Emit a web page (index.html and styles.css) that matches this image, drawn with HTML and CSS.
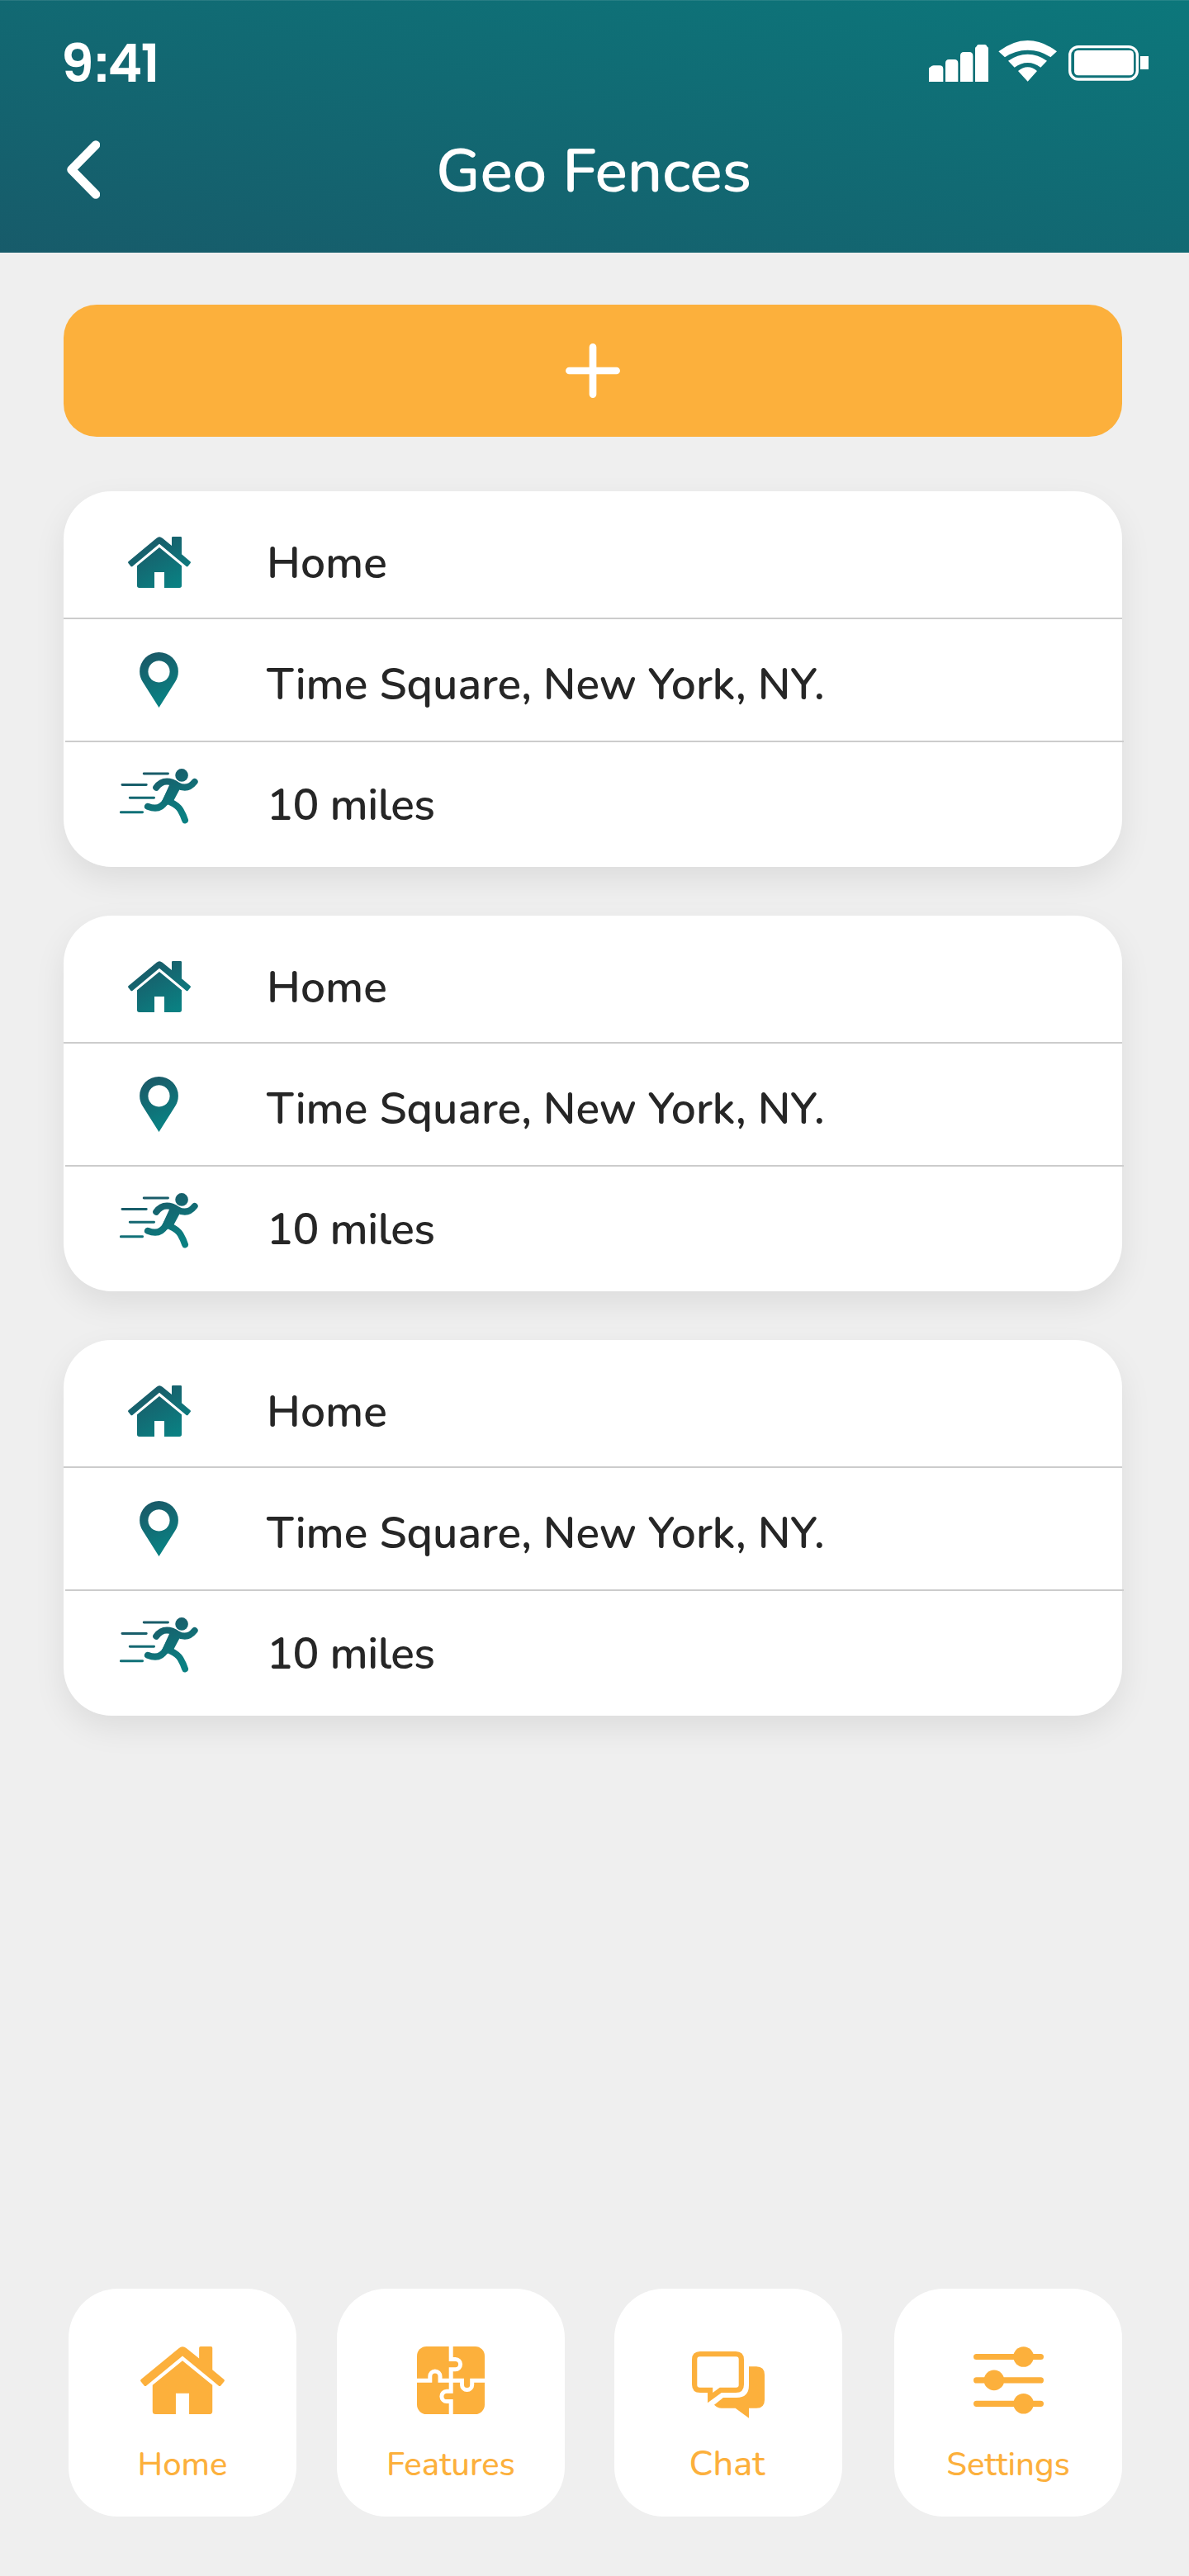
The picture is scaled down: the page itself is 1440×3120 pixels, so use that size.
FILE: index.html
```html
<!DOCTYPE html>
<html lang="en">
<head>
<meta charset="utf-8">
<title>Geo Fences</title>
<link rel="stylesheet" href="styles.css">
</head>
<body>
<svg class="sprite" aria-hidden="true">
  <defs>
    <linearGradient id="teal-house" gradientUnits="userSpaceOnUse" x1="340" y1="220" x2="440" y2="396"><stop offset="0" stop-color="#1a5967"/><stop offset="1" stop-color="#0a8082"/></linearGradient>
    <linearGradient id="teal-pin" gradientUnits="userSpaceOnUse" x1="350" y1="640" x2="420" y2="800"><stop offset="0" stop-color="#1a5967"/><stop offset="1" stop-color="#0a8082"/></linearGradient>
    <linearGradient id="teal-run" gradientUnits="userSpaceOnUse" x1="370" y1="1060" x2="440" y2="1240"><stop offset="0" stop-color="#1a5967"/><stop offset="1" stop-color="#0a8082"/></linearGradient>
    <symbol id="house" viewBox="282 210 228 186" preserveAspectRatio="none">
      <path d="M284 300 L386 215 Q396 206 407 215 L441 243 V214 Q441 210 445 210 H473 Q477 210 477 214 V274 L508 300 Q511 303 509 306 L500 317 Q497 321 493 317 L396 236 L299 317 Q295 321 292 317 L283 306 Q281 303 284 300Z"/>
      <path d="M396 249 L477 316 V388 Q477 396 469 396 H414 V339 H378 V396 H323 Q315 396 315 388 V316Z"/>
    </symbol>
    <symbol id="pin" viewBox="327 629 141 202">
      <path fill="url(#teal-pin)" fill-rule="evenodd" d="M397.500 831 L338 737 Q327 719 327 699 A70.500 70 0 0 1 468 699 Q468 719 457 737Z M397.500 660 a39.500 39.500 0 1 0 .01 0Z"/>
    </symbol>
    <symbol id="runner" viewBox="255 1052 286 200">
      <g fill="none" stroke="url(#teal-run)" stroke-linecap="round" stroke-linejoin="round">
        <path stroke-width="9" d="M343 1069H431M264 1110H352M292 1157H380M259 1210H338"/>
        <path stroke-width="24" d="M388 1120 Q404 1098 427 1098 Q446 1098 466 1112 Q502 1132 528 1099"/>
        <path stroke-width="24" d="M357 1189 Q401 1206 421 1172 L449 1118"/>
        <path stroke-width="24" d="M438 1172 Q468 1186 477 1203 Q487 1220 493 1239"/>
      </g>
      <path fill="url(#teal-run)" d="M437 1108 L476 1122 L450 1171 L425 1186 L410 1168Z"/>
      <circle fill="url(#teal-run)" cx="481" cy="1075" r="23.500"/>
    </symbol>
  </defs>
</svg>

<header class="header">
  <div class="status">
    <span class="status__time">9<span class="status__colon">:</span>41</span>
    <svg class="status__icons" viewBox="135 87 798 150" fill="#fff">
      <path d="M135 237V190Q135 186 140 184Q146 178 152 178H174Q187 178 187 191V237ZM195 237V170Q195 156 208 156H228Q241 156 241 170V237ZM249 237V143Q249 129 262 129H282Q295 129 295 143V237ZM303 237V116Q303 112 308 109Q310 102 316 102H338Q344 102 346 109Q351 112 351 116V237Z"/>
      <path d="M388 127Q440 87 494 87Q548 87 600 127L577 148Q540 122 494 122Q448 122 411 148ZM423 161Q457 137 494 137Q531 137 564 161L541 185Q519 168 494 168Q469 168 446 185ZM459 198Q475 184 494 184Q513 184 528 198L494 236Z"/>
      <rect x="647" y="110" width="245" height="118" rx="31" fill="none" stroke="#fff" stroke-width="10"/>
      <rect x="663" y="123" width="216" height="91" rx="14"/>
      <rect x="903" y="144" width="30" height="48"/>
    </svg>
  </div>
  <div class="titlebar">
    <svg class="titlebar__back" viewBox="0 0 40 71"><path d="M35 5.500 5.500 35.500 35 65.500" fill="none" stroke="#fff" stroke-width="10.500" stroke-linecap="round" stroke-linejoin="round"/></svg>
    <h1 class="titlebar__title">Geo Fences</h1>
  </div>
</header>

<main class="content">
  <button class="add" type="button" aria-label="Add geo fence">
    <svg class="add__icon" viewBox="0 0 66 66"><path d="M33 4.400V61.600M4.400 33H61.600" stroke="#fff" stroke-width="8.700" stroke-linecap="round"/></svg>
  </button>

  <section class="card">
    <div class="row row--name"><svg class="icon-house" fill="url(#teal-house)"><use href="#house"/></svg><span class="label label--name">Home</span></div>
    <div class="row row--place"><svg class="icon-pin"><use href="#pin"/></svg><span class="label label--place">Time Square, New York, NY.</span></div>
    <div class="row row--range"><svg class="icon-runner"><use href="#runner"/></svg><span class="label label--range">10 miles</span></div>
  </section>
  <section class="card">
    <div class="row row--name"><svg class="icon-house" fill="url(#teal-house)"><use href="#house"/></svg><span class="label label--name">Home</span></div>
    <div class="row row--place"><svg class="icon-pin"><use href="#pin"/></svg><span class="label label--place">Time Square, New York, NY.</span></div>
    <div class="row row--range"><svg class="icon-runner"><use href="#runner"/></svg><span class="label label--range">10 miles</span></div>
  </section>
  <section class="card">
    <div class="row row--name"><svg class="icon-house" fill="url(#teal-house)"><use href="#house"/></svg><span class="label label--name">Home</span></div>
    <div class="row row--place"><svg class="icon-pin"><use href="#pin"/></svg><span class="label label--place">Time Square, New York, NY.</span></div>
    <div class="row row--range"><svg class="icon-runner"><use href="#runner"/></svg><span class="label label--range">10 miles</span></div>
  </section>
</main>

<nav class="nav">
  <a class="tile tile--home">
    <span class="tile__icon"><svg width="102" height="82" fill="#fcb03c"><use href="#house"/></svg></span>
    <span class="tile__label tile__label--home">Home</span>
  </a>
  <a class="tile tile--features">
    <span class="tile__icon"><svg width="82" height="82" viewBox="0 0 82 82"><rect width="82" height="82" rx="11.500" fill="#fcb03c"/><path fill="none" stroke="#fff" stroke-width="5" d="M41.200 0V15.500H46.500a6.100 6.100 0 0 1 0 12.200H41.200V54.300H36a6.100 6.100 0 0 0 0 12.200H41.200V82M0 41.300H15.800V36a6.100 6.100 0 0 1 12.200 0V41.300H54.500V46.500a6.100 6.100 0 0 0 12.200 0V41.300H82"/></svg></span>
    <span class="tile__label tile__label--features">Features</span>
  </a>
  <a class="tile tile--chat">
    <span class="tile__icon tile__icon--low"><svg width="88" height="81" viewBox="0 0 88 81" fill="#fcb03c"><path fill-rule="evenodd" d="M10 0H53Q63 0 63 10V40Q63 50 53 50H35.800L19 62.300V50H10Q0 50 0 40V10Q0 0 10 0ZM9.500 6.300Q6.300 6.300 6.300 9.500V40.500Q6.300 43.700 9.500 43.700H25.200V50L33.700 43.700H53.500Q56.700 43.700 56.700 40.500V9.500Q56.700 6.300 53.500 6.300Z"/><path d="M69 18.300H78Q88 18.300 88 28.300V58.700Q88 68.700 78 68.700H69V80.700L52.600 68.700H35.800Q31 68.700 27 64.700L37.900 56H53.900Q69 56 69 41Z"/></svg></span>
    <span class="tile__label tile__label--chat">Chat</span>
  </a>
  <a class="tile tile--settings">
    <span class="tile__icon"><svg width="85" height="82" viewBox="0 0 85 82" fill="#fcb03c"><path stroke="#fcb03c" stroke-width="7.200" stroke-linecap="round" d="M3.600 12.500H81.400M3.600 40.900H81.400M3.600 69.300H81.400"/><circle cx="60.600" cy="12.500" r="12.300"/><circle cx="24.900" cy="40.900" r="12.300"/><circle cx="60.600" cy="69.300" r="12.300"/></svg></span>
    <span class="tile__label tile__label--settings">Settings</span>
  </a>
</nav>
</body>
</html>
```

FILE: styles.css
```css
* { box-sizing: border-box; }

body {
  margin: 0;
  width: 1440px;
  height: 3120px;
  display: flex;
  flex-direction: column;
  background: #efefef;
  color: #262626;
  font-family: "Nunito", "Lato", sans-serif;
  font-weight: 600;
}

svg { display: block; flex: none; }
.sprite { width: 0; height: 0; position: absolute; }

/* Header */
.header {
  height: 306px;
  flex: none;
  background: linear-gradient(12deg, #175b6a, #0c777b);
  box-shadow: inset 0 1px rgba(255, 255, 255, .1);
  color: #fff;
}
.status {
  height: 150px;
  padding: 49px 49px 0 74px;
  display: flex;
  justify-content: space-between;
  align-items: flex-start;
}
.status__time {
  padding-top: 1px;
  font: 600 63px/52px "Poppins", "Inter", sans-serif;
  letter-spacing: -1.5px;
}
.status__colon {
  font: 700 66px/52px "Liberation Sans", sans-serif;
  letter-spacing: -3.5px;
}
.status__icons { width: 266px; height: 50px; }
.titlebar {
  height: 110px;
  padding-left: 81px;
  display: grid;
  grid-template-columns: 40px 1196px;
  align-items: center;
}
.titlebar__back { width: 40px; height: 71px; }
.titlebar__title {
  margin: 0;
  padding-top: 5px;
  text-align: center;
  font-size: 73.5px;
  font-weight: 600;
  letter-spacing: -.2px;
  line-height: 80px;
}

/* Fence list */
.content {
  padding: 63px 81px 0 77px;
  display: flex;
  flex-direction: column;
  flex: 1;
}
.add {
  height: 160px;
  margin-bottom: 66px;
  padding: 0;
  border: 0;
  border-radius: 40px;
  background: #fcb03c;
  display: flex;
  align-items: center;
  justify-content: center;
}
.add__icon { width: 66px; height: 66px; }

.card {
  height: 455px;
  margin-bottom: 59px;
  border-radius: 58px;
  background: #fff;
  box-shadow: 0 15px 38px rgba(0, 0, 0, .08);
}
.row {
  display: grid;
  grid-template-columns: 231px 1fr;
  align-items: center;
  justify-items: center;
}
.row--name { height: 155px; padding-top: 19px; border-bottom: 2px solid #ccc; }
.row--place {
  height: 149px;
  margin: 0 -2px 0 2px;
  grid-template-columns: 227px 1fr;
  border-bottom: 2px solid #ccc;
}
.row--range { height: 130px; }
.icon-house { width: 76px; height: 62px; }
.icon-pin { width: 47px; height: 67px; }
.icon-runner { width: 95px; height: 67px; }

.label {
  justify-self: start;
  font-size: 53.3px;
  line-height: 60px;
  white-space: nowrap;
}
.label--name { padding: 4px 0 0 15px; }
.label--place { padding: 12px 0 0 17px; }
.label--range { padding: 23px 0 0 15px; letter-spacing: -.5px; }

/* Bottom navigation */
.nav {
  height: 348px;
  padding-left: 83px;
  display: flex;
  flex: none;
}
.tile {
  width: 276px;
  height: 276px;
  border-radius: 60px;
  background: #fff;
  color: #fcb03c;
  display: flex;
  flex-direction: column;
  align-items: center;
}
.tile--features { margin-left: 49px; }
.tile--chat { margin-left: 60px; }
.tile--settings { margin-left: 63px; }
.tile__icon { height: 182px; padding-top: 70px; }
.tile__icon--low { padding-top: 76px; }
.tile__label {
  padding-top: 1px;
  font-size: 40px;
  font-weight: 500;
  line-height: 60px;
}
.tile__label--chat { font-size: 43px; margin-top: -1px; margin-right: 3px; }
```
